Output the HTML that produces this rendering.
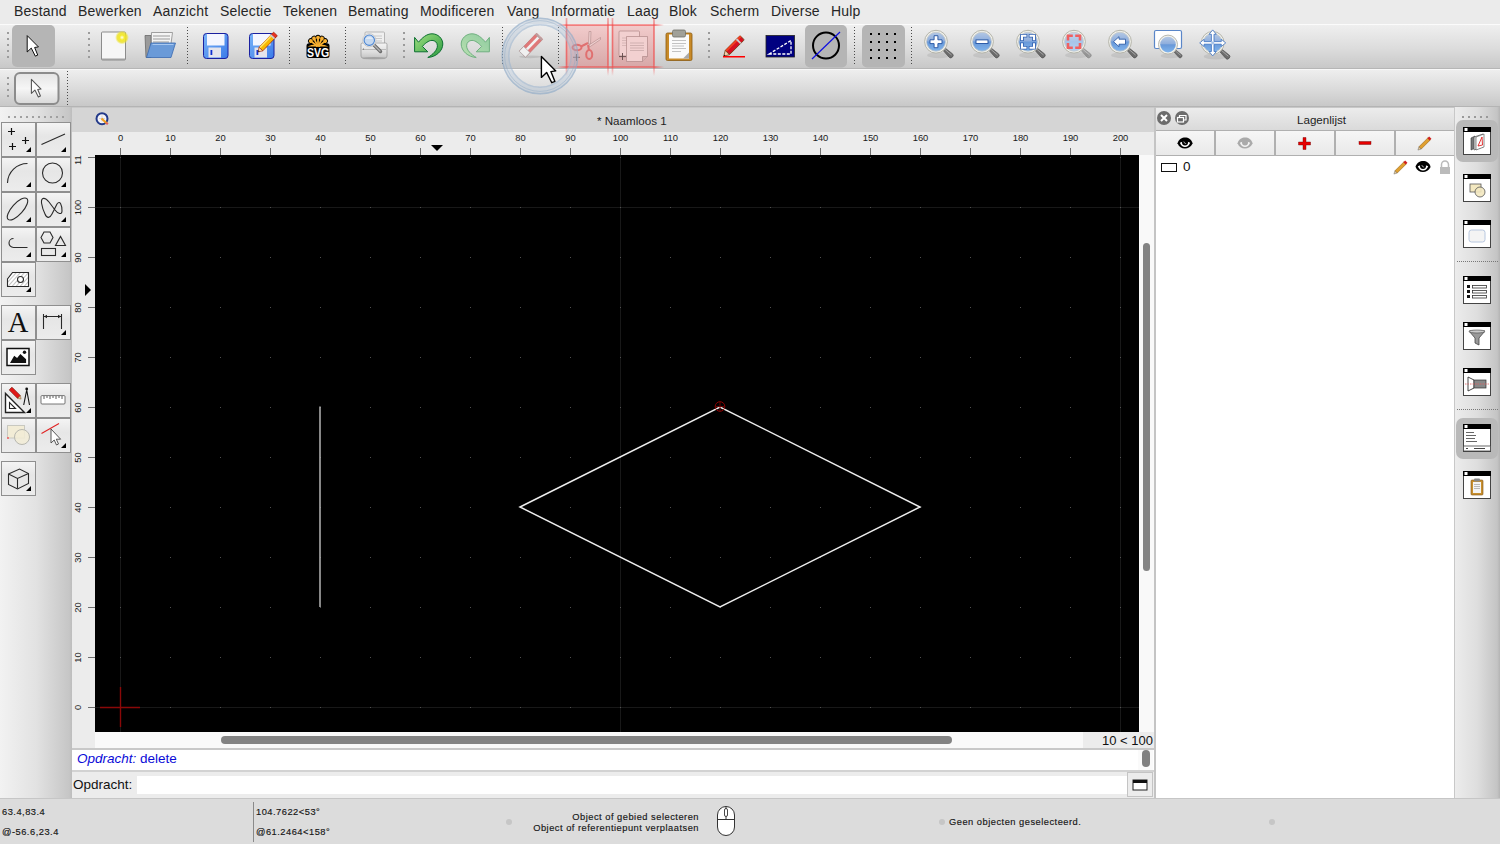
<!DOCTYPE html>
<html><head><meta charset="utf-8">
<style>
*{margin:0;padding:0;box-sizing:border-box}
html,body{width:1500px;height:844px;overflow:hidden;background:#ececec;font-family:"Liberation Sans",sans-serif;color:#1e1e1e}
.a{position:absolute}
.menu span{position:absolute;top:3px;font-size:14px;line-height:17px;letter-spacing:0.2px;color:#262626;white-space:nowrap}
.tb{position:absolute;left:0;width:1500px}
.sep{position:absolute;width:1px;border-left:1px dotted #555}
.grip{position:absolute;width:2px}
.grip i{position:absolute;left:0;width:2px;height:2px;background:#9a9a9a}
.ic{position:absolute}
.lb{position:absolute;width:35px;height:35px;border:1px solid #8f8f8f;background:linear-gradient(#f4f4f4,#e6e6e6 40%,#ececec)}
.lb svg{position:absolute;left:0;top:0}
.rn{position:absolute;font-size:10px;line-height:10px;color:#1a1a1a;text-align:center;width:30px}
.vn{position:absolute;font-size:10px;line-height:10px;color:#1a1a1a;text-align:center;width:30px;transform:rotate(-90deg)}
.st{position:absolute;font-size:9.3px;line-height:12px;letter-spacing:0.5px;color:#161616;white-space:nowrap;-webkit-text-stroke:0.15px #161616}
.rd{position:absolute;left:1463px;width:28px;height:28px}
</style></head><body>

<!-- MENU BAR -->
<div class="a menu" style="left:0;top:0;width:1500px;height:24px;background:#ebebeb">
<span style="left:14px">Bestand</span>
<span style="left:78px">Bewerken</span>
<span style="left:153px">Aanzicht</span>
<span style="left:220px">Selectie</span>
<span style="left:283px">Tekenen</span>
<span style="left:348px">Bemating</span>
<span style="left:420px">Modificeren</span>
<span style="left:507px">Vang</span>
<span style="left:551px">Informatie</span>
<span style="left:627px">Laag</span>
<span style="left:669px">Blok</span>
<span style="left:710px">Scherm</span>
<span style="left:771px">Diverse</span>
<span style="left:831px">Hulp</span>
</div>

<!-- TOOLBAR 1 -->
<div class="tb" style="top:24px;height:45px;background:linear-gradient(#efefef,#dcdcdc 55%,#c8c8c8);border-top:1px solid #fbfbfb;border-bottom:1px solid #b6b6b6"></div>
<!-- TOOLBAR 2 -->
<div class="tb" style="top:69px;height:38px;background:linear-gradient(#eeeeee,#dadada 55%,#c8c8c8);border-top:1px solid #f8f8f8;border-bottom:1px solid #b4b4b4"></div>

<div id="toolbar-icons"></div><!-- TBICONS --><svg class="a" style="left:0;top:0" width="1500" height="110" viewBox="0 0 1500 110"><defs>
<linearGradient id="lg" x1="0" y1="0" x2="0" y2="1"><stop offset="0" stop-color="#b4c8e4"/><stop offset="0.48" stop-color="#8cacdc"/><stop offset="0.5" stop-color="#6898d8"/><stop offset="1" stop-color="#80b4ec"/></linearGradient>
<linearGradient id="lgp" x1="0" y1="0" x2="0" y2="1"><stop offset="0" stop-color="#c8d6ea"/><stop offset="0.5" stop-color="#a8c4e8"/><stop offset="1" stop-color="#b4d0f0"/></linearGradient>
<linearGradient id="fl" x1="0" y1="0" x2="1" y2="1"><stop offset="0" stop-color="#7ab4f8"/><stop offset="1" stop-color="#3a7ae8"/></linearGradient>
<linearGradient id="gr" x1="0" y1="0" x2="1" y2="1"><stop offset="0" stop-color="#a0e080"/><stop offset="1" stop-color="#2a9a40"/></linearGradient>
<linearGradient id="grp" x1="0" y1="0" x2="1" y2="1"><stop offset="0" stop-color="#90cca0"/><stop offset="1" stop-color="#b8e0b0"/></linearGradient>
<radialGradient id="glow"><stop offset="0" stop-color="#fffff0"/><stop offset="0.35" stop-color="#f4ea30"/><stop offset="0.7" stop-color="#ece020" stop-opacity="0.8"/><stop offset="1" stop-color="#f0e840" stop-opacity="0"/></radialGradient>
<linearGradient id="pk" x1="0" y1="0" x2="0" y2="1"><stop offset="0" stop-color="#f2caca"/><stop offset="1" stop-color="#d8a6a6"/></linearGradient>
<linearGradient id="rl" x1="0" y1="0" x2="1" y2="0"><stop offset="0" stop-color="#f04848" stop-opacity="0"/><stop offset="0.08" stop-color="#f04848" stop-opacity="0.65"/><stop offset="0.92" stop-color="#f04848" stop-opacity="0.65"/><stop offset="1" stop-color="#f04848" stop-opacity="0"/></linearGradient>
<linearGradient id="rv" x1="0" y1="0" x2="0" y2="1"><stop offset="0" stop-color="#f04848" stop-opacity="0.4"/><stop offset="0.15" stop-color="#f04848" stop-opacity="0.65"/><stop offset="0.8" stop-color="#f04848" stop-opacity="0.65"/><stop offset="1" stop-color="#f04848" stop-opacity="0"/></linearGradient>
</defs><rect x="7" y="32" width="2" height="2" fill="#9c9c9c"/><rect x="7" y="38" width="2" height="2" fill="#9c9c9c"/><rect x="7" y="44" width="2" height="2" fill="#9c9c9c"/><rect x="7" y="50" width="2" height="2" fill="#9c9c9c"/><rect x="7" y="56" width="2" height="2" fill="#9c9c9c"/><rect x="12" y="25" width="43" height="42" rx="5" fill="#b5b5b5"/><path transform="translate(27.2 35.6) scale(0.78)" d="M0 0V21L5.2 16L10.4 26.3L13.5 25L9.5 15.2L14.4 14.5Z" fill="#fff" stroke="#000" stroke-width="1.2" stroke-linejoin="round"/><rect x="88" y="32" width="2" height="2" fill="#9c9c9c"/><rect x="88" y="38" width="2" height="2" fill="#9c9c9c"/><rect x="88" y="44" width="2" height="2" fill="#9c9c9c"/><rect x="88" y="50" width="2" height="2" fill="#9c9c9c"/><rect x="88" y="56" width="2" height="2" fill="#9c9c9c"/><rect x="101.5" y="32" width="24" height="28" rx="1" fill="#f6f6f6" stroke="#8c8c8c" stroke-width="1"/><rect x="102" y="58.5" width="23" height="1.5" fill="#a0a0a0"/><circle cx="122" cy="37.5" r="7" fill="url(#glow)"/><path d="M145 35.5h6v22h-5z" fill="#9a9a9a" stroke="#6a6a6a" stroke-width="0.8"/><path d="M151.5 32.5h21l-2 15h-19z" fill="#f4f4f4" stroke="#8a8a8a" stroke-width="0.8"/><path d="M153 36h17M153 39h17M153 42h16" stroke="#b8b8b8" stroke-width="1.5"/><path d="M151 43h24.5l-4.5 14.5h-24.5z" fill="#6a9ad8" stroke="#3a6ab0" stroke-width="0.8"/><path d="M152.5 44.5h21" stroke="#a8c8f0" stroke-width="1"/><line x1="187.5" y1="27" x2="187.5" y2="66" stroke="#4a4a4a" stroke-width="1" stroke-dasharray="1 2"/><rect x="203.5" y="33.5" width="24.5" height="25" rx="3" fill="url(#fl)" stroke="#1a20a0" stroke-width="1"/><rect x="207" y="34" width="17.5" height="11.5" fill="#f4f6ff"/><rect x="208.5" y="47.5" width="12.5" height="10" fill="#e4e4ec"/><rect x="210.5" y="50" width="1.8" height="5" fill="#1030d0"/><rect x="249.5" y="33.5" width="24.5" height="25" rx="3" fill="url(#fl)" stroke="#1a20a0" stroke-width="1"/><rect x="253" y="34" width="17.5" height="11.5" fill="#f4f6ff"/><rect x="254.5" y="47.5" width="12.5" height="10" fill="#e4e4ec"/><rect x="256.5" y="50" width="1.8" height="5" fill="#1030d0"/><g transform="translate(259.5 50.5) rotate(-46)"><rect x="2" y="-2.6" width="19" height="5.2" fill="#f8b800" stroke="#a02000" stroke-width="0.7"/><rect x="2" y="-2.6" width="19" height="1.7" fill="#ffe060"/><rect x="19.5" y="-2.6" width="3.5" height="5.2" fill="#e83020" stroke="#a02000" stroke-width="0.7"/><rect x="18" y="-2.6" width="1.8" height="5.2" fill="#ccc"/><path d="M2 -2.6L-2 0L2 2.6Z" fill="#f8e0b0" stroke="#a02000" stroke-width="0.6"/><path d="M-0.5 -1L-2 0L-0.5 1Z" fill="#222"/></g><line x1="289.5" y1="27" x2="289.5" y2="66" stroke="#4a4a4a" stroke-width="1" stroke-dasharray="1 2"/><g><path d="M306.5 46Q306.5 43.3 309 43.3H327Q329.5 43.3 329.5 46V55.5Q329.5 58 327 58H309Q306.5 58 306.5 55.5Z" fill="#000"/><g transform="rotate(-50 318 47)"><path d="M318 46V37.5" stroke="#000" stroke-width="5.4" stroke-linecap="round"/></g><g transform="rotate(-25 318 47)"><path d="M318 46V37.5" stroke="#000" stroke-width="5.4" stroke-linecap="round"/></g><g transform="rotate(0 318 47)"><path d="M318 46V37.5" stroke="#000" stroke-width="5.4" stroke-linecap="round"/></g><g transform="rotate(25 318 47)"><path d="M318 46V37.5" stroke="#000" stroke-width="5.4" stroke-linecap="round"/></g><g transform="rotate(50 318 47)"><path d="M318 46V37.5" stroke="#000" stroke-width="5.4" stroke-linecap="round"/></g><g transform="rotate(-50 318 47)"><path d="M318 45.5V37.5" stroke="#f8b030" stroke-width="1.8" stroke-linecap="round"/><circle cx="318" cy="37.6" r="1.9" fill="#f8b030"/></g><g transform="rotate(-25 318 47)"><path d="M318 45.5V37.5" stroke="#f8b030" stroke-width="1.8" stroke-linecap="round"/><circle cx="318" cy="37.6" r="1.9" fill="#f8b030"/></g><g transform="rotate(0 318 47)"><path d="M318 45.5V37.5" stroke="#f8b030" stroke-width="1.8" stroke-linecap="round"/><circle cx="318" cy="37.6" r="1.9" fill="#f8b030"/></g><g transform="rotate(25 318 47)"><path d="M318 45.5V37.5" stroke="#f8b030" stroke-width="1.8" stroke-linecap="round"/><circle cx="318" cy="37.6" r="1.9" fill="#f8b030"/></g><g transform="rotate(50 318 47)"><path d="M318 45.5V37.5" stroke="#f8b030" stroke-width="1.8" stroke-linecap="round"/><circle cx="318" cy="37.6" r="1.9" fill="#f8b030"/></g><path d="M307.5 46.6Q312 44 318 44.5Q324 44 328.5 46.6Z" fill="#f8b030"/><text transform="translate(318 57) scale(0.78 1)" text-anchor="middle" font-family="Liberation Sans" font-weight="bold" font-size="13.5" fill="#fff">SVG</text></g><line x1="345.5" y1="27" x2="345.5" y2="66" stroke="#4a4a4a" stroke-width="1" stroke-dasharray="1 2"/><defs><linearGradient id="prb" x1="0" y1="0" x2="0" y2="1"><stop offset="0" stop-color="#f4f4f4"/><stop offset="0.6" stop-color="#dedede"/><stop offset="1" stop-color="#c4c4c4"/></linearGradient></defs><rect x="365" y="32" width="19.5" height="16" rx="1" fill="#f0f0f0" stroke="#a8a8a8" stroke-width="0.8"/><path d="M372 36h10M372 38.5h10M372 41h10" stroke="#c8c8c8" stroke-width="1.2"/><path d="M361 44.5q0-1.5 1.5-1.5h23q1.5 0 1.5 1.5v11.5q0 2-2 2h-22q-2 0-2-2z" fill="url(#prb)" stroke="#9a9a9a" stroke-width="0.8"/><path d="M362 49.5h24" stroke="#b0b0b0" stroke-width="0.8"/><circle cx="363.5" cy="49" r="0.6" fill="#555"/><ellipse cx="374" cy="58.5" rx="12" ry="1.2" fill="#000" opacity="0.12"/><path d="M373.5 44.5L380.5 51.5" stroke="#6a6a6a" stroke-width="3.4" stroke-linecap="round"/><path d="M374 45L380 51" stroke="#b4b4b4" stroke-width="1.4" stroke-linecap="round"/><circle cx="369.3" cy="40.2" r="6.6" fill="#f2f2f2" stroke="#c0c0c0" stroke-width="0.8"/><circle cx="369.3" cy="40.2" r="5.2" fill="#c4d8f0" stroke="#4a84d0" stroke-width="1.1"/><path d="M365.5 39a4 3 0 0 1 7.6 0" fill="#e8f0fa" opacity="0.8"/><rect x="403" y="32" width="2" height="2" fill="#9a9a9a"/><rect x="403" y="38" width="2" height="2" fill="#9a9a9a"/><rect x="403" y="44" width="2" height="2" fill="#9a9a9a"/><rect x="403" y="50" width="2" height="2" fill="#9a9a9a"/><rect x="403" y="56" width="2" height="2" fill="#9a9a9a"/><path transform="translate(408 26)" d="M6.6 11.4L10.5 16.2C14 12 18.5 7.8 24 7.8C30 7.8 34.8 12.5 34.8 18C34.8 25 28 31 19.8 31.5C25 28.5 29.4 24 29.4 19.8C29.4 16.5 27 14.4 24 14.4C20.5 14.4 17 17.5 14.4 20.4L19.8 25.8L6.6 25.8Z" fill="url(#gr)" stroke="#0c7030" stroke-width="1"/><path transform="translate(496 26) scale(-1 1)" d="M6.6 11.4L10.5 16.2C14 12 18.5 7.8 24 7.8C30 7.8 34.8 12.5 34.8 18C34.8 25 28 31 19.8 31.5C25 28.5 29.4 24 29.4 19.8C29.4 16.5 27 14.4 24 14.4C20.5 14.4 17 17.5 14.4 20.4L19.8 25.8L6.6 25.8Z" fill="url(#grp)" stroke="#70b080" stroke-width="1"/><line x1="502.5" y1="27" x2="502.5" y2="66" stroke="#4a4a4a" stroke-width="1" stroke-dasharray="1 2"/><ellipse cx="530" cy="56.8" rx="11" ry="1.4" fill="#000" opacity="0.1"/><g transform="translate(531 45.2) rotate(-46)"><rect x="-12.5" y="-4.4" width="25" height="8.8" rx="1" fill="#e07878" stroke="#c07070" stroke-width="0.6"/><rect x="-12.5" y="-1.3" width="25" height="2.6" fill="#f2f2f2"/><rect x="10.5" y="-4.4" width="2" height="8.8" fill="#b8a0a0"/><rect x="-12.5" y="-4.4" width="6.5" height="8.8" fill="#f0f0f0" stroke="#a0a0a0" stroke-width="0.6"/></g><line x1="558.5" y1="27" x2="558.5" y2="66" stroke="#4a4a4a" stroke-width="1" stroke-dasharray="1 2"/><rect x="566" y="25" width="42" height="42" fill="url(#pk)" opacity="0.95"/><rect x="612" y="25" width="42" height="42" fill="url(#pk)" opacity="0.95"/><path d="M588.5 44L589 31.5L591 31.5L590.5 44Z" fill="#f0d0d0" stroke="#b89090" stroke-width="0.7"/><path d="M589 45L600.5 37.5L600.5 39.5L589.5 47Z" fill="#f0d0d0" stroke="#b89090" stroke-width="0.7"/><ellipse cx="577" cy="47.5" rx="4.5" ry="2.8" fill="none" stroke="#e07070" stroke-width="2"/><ellipse cx="589.2" cy="54.5" rx="3" ry="4.5" fill="none" stroke="#e07070" stroke-width="2"/><path d="M581 46.5L588 43M588 45L589 50" stroke="#e07070" stroke-width="2"/><path d="M573 57.3h7M576.5 54v7" stroke="#806060" stroke-width="0.9"/><rect x="619" y="31" width="20.5" height="25" rx="1" fill="#f2d0d0" stroke="#b08888" stroke-width="0.7"/><path d="M622 38h14M622 40.5h14M622 43h14M622 45.5h14" stroke="#d0b0b0" stroke-width="0.8"/><path d="M626.5 36.5h21v20l-5 5h-16z" fill="#f2d0d0" stroke="#b08888" stroke-width="0.7"/><path d="M642.5 61.5v-5h5" fill="#d8b0b0" stroke="#b08888" stroke-width="0.7"/><path d="M630 43h14M630 45.5h14M630 48h14M630 50.5h14" stroke="#c8a8a8" stroke-width="0.8"/><path d="M619 56.6h7M622.5 53v7" stroke="#604848" stroke-width="0.9"/><rect x="557" y="24.2" width="107" height="1.7" fill="url(#rl)"/><rect x="557" y="66.2" width="107" height="1.7" fill="url(#rl)"/><rect x="565.65" y="18" width="1.7" height="58" fill="url(#rv)"/><rect x="607.15" y="18" width="1.7" height="58" fill="url(#rv)"/><rect x="611.65" y="18" width="1.7" height="58" fill="url(#rv)"/><rect x="653.15" y="18" width="1.7" height="58" fill="url(#rv)"/><rect x="666" y="33" width="26" height="27.5" rx="1.5" fill="#c88a28" stroke="#8a5a10" stroke-width="0.8"/><rect x="669" y="34.5" width="20" height="24" fill="#fafafa"/><path d="M689 58.5v-6l-6 6z" fill="#aaa"/><rect x="672.5" y="30" width="13" height="7" rx="1.5" fill="#a0a098" stroke="#707068" stroke-width="0.8"/><path d="M672 40.5h14M672 43.5h14M672 46h12M672 48.5h14M672 51.5h9" stroke="#bbb" stroke-width="0.9"/><rect x="708" y="32" width="2" height="2" fill="#9a9a9a"/><rect x="708" y="38" width="2" height="2" fill="#9a9a9a"/><rect x="708" y="44" width="2" height="2" fill="#9a9a9a"/><rect x="708" y="50" width="2" height="2" fill="#9a9a9a"/><rect x="708" y="56" width="2" height="2" fill="#9a9a9a"/><g transform="translate(724.5 55.4) rotate(-45)"><rect x="4" y="-3" width="21" height="6" rx="1" fill="#d81020" stroke="#6a3a10" stroke-width="0.8"/><rect x="4" y="-3" width="21" height="2" fill="#f04020"/><rect x="19" y="-3" width="2" height="6" fill="#ccc"/><path d="M4 -3L-1 0L4 3Z" fill="#f4d0b0" stroke="#6a3a10" stroke-width="0.7"/><path d="M0.5 -0.9L-1 0L0.5 0.9Z" fill="#111"/></g><rect x="723" y="56" width="22" height="1.5" fill="#ff0000"/><rect x="766" y="35.5" width="28.5" height="21.5" fill="#000080" stroke="#222" stroke-width="0.8"/><path d="M769 54L791 40.5V54Z" fill="none" stroke="#fff" stroke-width="1.3" stroke-dasharray="3 1.5"/><rect x="805" y="25" width="42" height="42.5" rx="5" fill="#b5b5b5"/><circle cx="826" cy="45.6" r="13" fill="none" stroke="#000" stroke-width="2"/><path d="M812 59L840 32" stroke="#1010e0" stroke-width="1.2"/><line x1="854.5" y1="27" x2="854.5" y2="66" stroke="#4a4a4a" stroke-width="1" stroke-dasharray="1 2"/><rect x="862" y="25" width="43" height="42.5" rx="5" fill="#b5b5b5"/><rect x="870" y="33" width="2" height="2" fill="#000"/><rect x="870" y="41" width="2" height="2" fill="#000"/><rect x="870" y="49" width="2" height="2" fill="#000"/><rect x="870" y="57" width="2" height="2" fill="#000"/><rect x="878" y="33" width="2" height="2" fill="#000"/><rect x="878" y="41" width="2" height="2" fill="#000"/><rect x="878" y="49" width="2" height="2" fill="#000"/><rect x="878" y="57" width="2" height="2" fill="#000"/><rect x="886" y="33" width="2" height="2" fill="#000"/><rect x="886" y="41" width="2" height="2" fill="#000"/><rect x="886" y="49" width="2" height="2" fill="#000"/><rect x="886" y="57" width="2" height="2" fill="#000"/><rect x="894" y="33" width="2" height="2" fill="#000"/><rect x="894" y="41" width="2" height="2" fill="#000"/><rect x="894" y="49" width="2" height="2" fill="#000"/><rect x="894" y="57" width="2" height="2" fill="#000"/><line x1="911.5" y1="27" x2="911.5" y2="66" stroke="#4a4a4a" stroke-width="1" stroke-dasharray="1 2"/><g transform="translate(936 41.7)"><ellipse cx="3.0" cy="13.5" rx="12.0" ry="3.0" fill="#000" opacity="0.08"/><g transform="scale(1.0) rotate(43)"><path d="M11 -1.6L20.5 -2.4Q22.5 -2.4 22.5 0Q22.5 2.4 20.5 2.4L11 1.6Z" fill="#6c6c6c" stroke="#4a4a4a" stroke-width="0.6"/><path d="M12 -0.5L20.5 -0.9" stroke="#a8a8a8" stroke-width="0.9"/></g><circle r="11.4" fill="#f2f2ec" stroke="#b4b4aa" stroke-width="1"/><circle r="9.5" fill="url(#lg)" stroke="#c4c8c8" stroke-width="0.8"/><path d="M-1.9 -6H1.9V-1.9H6V1.9H1.9V6H-1.9V1.9H-6V-1.9H-1.9Z" fill="#fff" stroke="#2050a0" stroke-width="0.9"/></g><g transform="translate(982 41.7)"><ellipse cx="3.0" cy="13.5" rx="12.0" ry="3.0" fill="#000" opacity="0.08"/><g transform="scale(1.0) rotate(43)"><path d="M11 -1.6L20.5 -2.4Q22.5 -2.4 22.5 0Q22.5 2.4 20.5 2.4L11 1.6Z" fill="#6c6c6c" stroke="#4a4a4a" stroke-width="0.6"/><path d="M12 -0.5L20.5 -0.9" stroke="#a8a8a8" stroke-width="0.9"/></g><circle r="11.4" fill="#f2f2ec" stroke="#b4b4aa" stroke-width="1"/><circle r="9.5" fill="url(#lg)" stroke="#c4c8c8" stroke-width="0.8"/><rect x="-6" y="-1.8" width="12" height="3.6" fill="#fff" stroke="#2050a0" stroke-width="0.9"/></g><g transform="translate(1028 41.7)"><ellipse cx="3.0" cy="13.5" rx="12.0" ry="3.0" fill="#000" opacity="0.08"/><g transform="scale(1.0) rotate(43)"><path d="M11 -1.6L20.5 -2.4Q22.5 -2.4 22.5 0Q22.5 2.4 20.5 2.4L11 1.6Z" fill="#6c6c6c" stroke="#4a4a4a" stroke-width="0.6"/><path d="M12 -0.5L20.5 -0.9" stroke="#a8a8a8" stroke-width="0.9"/></g><circle r="11.4" fill="#f2f2ec" stroke="#b4b4aa" stroke-width="1"/><circle r="9.5" fill="url(#lg)" stroke="#c4c8c8" stroke-width="0.8"/><path d="M-6 -2.5V-6H-2.5M2.5 -6H6V-2.5M6 2.5V6H2.5M-2.5 6H-6V2.5" fill="none" stroke="#3060b0" stroke-width="3.6" stroke-linecap="square"/><path d="M-6 -2.5V-6H-2.5M2.5 -6H6V-2.5M6 2.5V6H2.5M-2.5 6H-6V2.5" fill="none" stroke="#fff" stroke-width="2" stroke-linecap="square"/></g><g transform="translate(1074 41.7)"><ellipse cx="3.0" cy="13.5" rx="12.0" ry="3.0" fill="#000" opacity="0.08"/><g transform="scale(1.0) rotate(43)" opacity="0.55"><path d="M11 -1.6L20.5 -2.4Q22.5 -2.4 22.5 0Q22.5 2.4 20.5 2.4L11 1.6Z" fill="#6c6c6c" stroke="#4a4a4a" stroke-width="0.6"/><path d="M12 -0.5L20.5 -0.9" stroke="#a8a8a8" stroke-width="0.9"/></g><circle r="11.4" fill="#f2f2ec" stroke="#b4b4aa" stroke-width="1"/><circle r="9.5" fill="url(#lgp)" stroke="#c4c8c8" stroke-width="0.8"/><path d="M-6 -2.5V-6H-2.5M2.5 -6H6V-2.5M6 2.5V6H2.5M-2.5 6H-6V2.5" fill="none" stroke="#f06060" stroke-width="2.6" stroke-linecap="square"/></g><g transform="translate(1120 41.7)"><ellipse cx="3.0" cy="13.5" rx="12.0" ry="3.0" fill="#000" opacity="0.08"/><g transform="scale(1.0) rotate(43)"><path d="M11 -1.6L20.5 -2.4Q22.5 -2.4 22.5 0Q22.5 2.4 20.5 2.4L11 1.6Z" fill="#6c6c6c" stroke="#4a4a4a" stroke-width="0.6"/><path d="M12 -0.5L20.5 -0.9" stroke="#a8a8a8" stroke-width="0.9"/></g><circle r="11.4" fill="#f2f2ec" stroke="#b4b4aa" stroke-width="1"/><circle r="9.5" fill="url(#lg)" stroke="#c4c8c8" stroke-width="0.8"/><path d="M-6.5 0L-1 -5V-2.5H5.5V2.5H-1V5Z" fill="#fff" stroke="#2050a0" stroke-width="0.8"/></g><rect x="1154.5" y="30.5" width="27" height="18" rx="1.5" fill="#fff" stroke="#5a86c8" stroke-width="1.2"/><g transform="translate(1168 44.6)"><ellipse cx="2.46" cy="11.069999999999999" rx="9.84" ry="2.46" fill="#000" opacity="0.08"/><g transform="scale(0.82) rotate(43)"><path d="M11 -1.6L20.5 -2.4Q22.5 -2.4 22.5 0Q22.5 2.4 20.5 2.4L11 1.6Z" fill="#6c6c6c" stroke="#4a4a4a" stroke-width="0.6"/><path d="M12 -0.5L20.5 -0.9" stroke="#a8a8a8" stroke-width="0.9"/></g><circle r="9.5" fill="#f2f2ec" stroke="#b8b8b0" stroke-width="1"/><circle r="7.8" fill="url(#lg)"/></g><g transform="translate(1212.7 42.9)"><ellipse cx="3.0" cy="13.5" rx="12.0" ry="3.0" fill="#000" opacity="0.08"/><g transform="scale(1.0) rotate(43)"><path d="M11 -1.6L20.5 -2.4Q22.5 -2.4 22.5 0Q22.5 2.4 20.5 2.4L11 1.6Z" fill="#6c6c6c" stroke="#4a4a4a" stroke-width="0.6"/><path d="M12 -0.5L20.5 -0.9" stroke="#a8a8a8" stroke-width="0.9"/></g><circle r="11.4" fill="#f2f2ec" stroke="#b4b4aa" stroke-width="1"/><circle r="9.5" fill="url(#lg)" stroke="#c4c8c8" stroke-width="0.8"/><path d="M0 -13L-3.6 -8.6H-1.3V-1.3H-8.6V-3.6L-13 0L-8.6 3.6V1.3H-1.3V8.6H-3.6L0 13L3.6 8.6H1.3V1.3H8.6V3.6L13 0L8.6 -3.6V-1.3H1.3V-8.6H3.6Z" fill="#fff" stroke="#3a70c0" stroke-width="0.8"/><rect x="-1.5" y="-1.5" width="3" height="3" fill="#a8c4e8"/></g><rect x="7" y="77" width="2" height="2" fill="#9c9c9c"/><rect x="7" y="83" width="2" height="2" fill="#9c9c9c"/><rect x="7" y="89" width="2" height="2" fill="#9c9c9c"/><rect x="7" y="95" width="2" height="2" fill="#9c9c9c"/><rect x="15" y="73" width="43.5" height="31" rx="5" fill="url(#btn2)" stroke="#8c8c8c" stroke-width="2"/><path transform="translate(31.4 79.3) scale(0.67)" d="M0 0V21L5.2 16L10.4 26.3L13.5 25L9.5 15.2L14.4 14.5Z" fill="#fff" stroke="#555" stroke-width="1.6" stroke-linejoin="round"/><line x1="67.5" y1="71" x2="67.5" y2="106" stroke="#4a4a4a" stroke-width="1" stroke-dasharray="1 2"/><defs><filter id="bl" x="-20%" y="-20%" width="140%" height="140%"><feGaussianBlur stdDeviation="0.6"/></filter></defs><g filter="url(#bl)"><circle cx="540" cy="56" r="34.5" fill="none" stroke="#a4bcd4" stroke-width="8" opacity="0.32"/><circle cx="540" cy="56" r="37.8" fill="none" stroke="#88a6c4" stroke-width="1.4" opacity="0.5"/><circle cx="540" cy="56" r="35.4" fill="none" stroke="#88a6c4" stroke-width="1" opacity="0.4"/><circle cx="540" cy="56" r="31.2" fill="none" stroke="#98b2cc" stroke-width="1.4" opacity="0.4"/></g><path transform="translate(541.4 56.4) scale(1.0)" d="M0 0V21L5.2 16L10.4 26.3L13.5 25L9.5 15.2L14.4 14.5Z" fill="#fff" stroke="#000" stroke-width="1.4" stroke-linejoin="round"/><defs><linearGradient id="btn2" x1="0" y1="0" x2="0" y2="1"><stop offset="0" stop-color="#e4e4e4"/><stop offset="0.5" stop-color="#f6f6f6"/><stop offset="1" stop-color="#d8d8d8"/></linearGradient></defs></svg><!-- /TBICONS -->

<!-- LEFT DOCK -->
<div class="a" style="left:0;top:107px;width:72px;height:691px;background:linear-gradient(90deg,#f2f2f2,#e2e2e2 50%,#c6c6c6 96%,#bdbdbd)"></div>
<div class="a" style="left:8px;top:116px;width:56px;height:2px;background:repeating-linear-gradient(90deg,#a0a0a0 0 2px,transparent 2px 6px)"></div>
<div class="lb" style="left:1px;top:122px"><svg width="35" height="35" viewBox="1 1 35 35"><path d="M7 9.5h7M10.5 6v7M21 18.5h7M24.5 15v7M8 24.5h7M11.5 21v7" stroke="#111" stroke-width="1.2"/><path d="M30 25v5h-5z" fill="#000"/></svg></div>
<div class="lb" style="left:36px;top:122px"><svg width="35" height="35" viewBox="1 1 35 35"><path d="M5.5 22.5L29 12" fill="none" stroke="#2a2a2a" stroke-width="1.1"/><path d="M30 25v5h-5z" fill="#000"/></svg></div>
<div class="lb" style="left:1px;top:157px"><svg width="35" height="35" viewBox="1 1 35 35"><path d="M6.5 26A20 20 0 0 1 26.5 6.5" fill="none" stroke="#2a2a2a" stroke-width="1.1"/><path d="M30 25v5h-5z" fill="#000"/></svg></div>
<div class="lb" style="left:36px;top:157px"><svg width="35" height="35" viewBox="1 1 35 35"><circle cx="16.5" cy="16" r="10" fill="none" stroke="#2a2a2a" stroke-width="1.1"/><path d="M30 25v5h-5z" fill="#000"/></svg></div>
<div class="lb" style="left:1px;top:192px"><svg width="35" height="35" viewBox="1 1 35 35"><ellipse cx="16.5" cy="17" rx="14" ry="5.5" transform="rotate(-48 16.5 17)" fill="none" stroke="#2a2a2a" stroke-width="1.1"/><path d="M30 25v5h-5z" fill="#000"/></svg></div>
<div class="lb" style="left:36px;top:192px"><svg width="35" height="35" viewBox="1 1 35 35"><path d="M5.5 11C5 5 9 5 13 10L19 18C22 22 26 23 26 19C26 13 24 8 21 12L16 22C14 26 11 27 9 22C7 18 6 14 5.5 11Z" fill="none" stroke="#2a2a2a" stroke-width="1.1"/><path d="M30 25v5h-5z" fill="#000"/></svg></div>
<div class="lb" style="left:1px;top:227px"><svg width="35" height="35" viewBox="1 1 35 35"><path d="M12.5 11.5A4.5 4.5 0 0 0 12.5 20.5H26.5" fill="none" stroke="#2a2a2a" stroke-width="1.1"/><path d="M30 25v5h-5z" fill="#000"/></svg></div>
<div class="lb" style="left:36px;top:227px"><svg width="35" height="35" viewBox="1 1 35 35"><path d="M8 5h6l3 5.5l-3 5.5h-6l-3-5.5z" fill="none" stroke="#2a2a2a" stroke-width="1.1"/><path d="M19.5 18.5h10l-5-9z" fill="none" stroke="#2a2a2a" stroke-width="1.1"/><rect x="5.5" y="21.5" width="14" height="7" fill="none" stroke="#2a2a2a" stroke-width="1.1"/><path d="M30 25v5h-5z" fill="#000"/></svg></div>
<div class="lb" style="left:1px;top:262px"><svg width="35" height="35" viewBox="1 1 35 35"><defs><pattern id="h" width="3" height="3" patternUnits="userSpaceOnUse" patternTransform="rotate(42)"><rect width="3" height="3" fill="#fff"/><line x1="0" y1="0" x2="0" y2="3" stroke="#888" stroke-width="1"/></pattern></defs><path d="M11.5 10.5h16v14h-21v-7.5z" fill="url(#h)" stroke="#2a2a2a" stroke-width="1.1"/><circle cx="19.5" cy="17.5" r="3" fill="#fff" stroke="#2a2a2a" stroke-width="1.1"/><path d="M30 25v5h-5z" fill="#000"/></svg></div>
<div class="lb" style="left:1px;top:305px"><svg width="35" height="35" viewBox="1 1 35 35"><text x="17" y="27.3" text-anchor="middle" font-family="Liberation Serif" font-size="28.5" fill="#111">A</text></svg></div>
<div class="lb" style="left:36px;top:305px"><svg width="35" height="35" viewBox="1 1 35 35"><path d="M7.5 9v15M25.5 9v15M8 11.5h17" fill="none" stroke="#2a2a2a" stroke-width="1.1"/><path d="M8 11.5l3-1.8v3.6zM25 11.5l-3-1.8v3.6z" fill="#222"/><path d="M30 25v5h-5z" fill="#000"/></svg></div>
<div class="lb" style="left:1px;top:340px"><svg width="35" height="35" viewBox="1 1 35 35"><rect x="6" y="8.5" width="22" height="17" fill="#fff" stroke="#111" stroke-width="1.5"/><path d="M9 23l4.2-7.3l2.9 2.3l3.3-4l5.7 5.2v3.8z" fill="#111"/><circle cx="23.5" cy="12.3" r="1.7" fill="#111"/></svg></div>
<div class="lb" style="left:1px;top:383px"><svg width="35" height="35" viewBox="1 1 35 35"><path d="M4.5 10.5v19h19z" fill="#fff" stroke="#222" stroke-width="1.4"/><path d="M8.5 19.5v6h6z" fill="none" stroke="#222" stroke-width="1.1"/><g transform="translate(9.5 5.5) rotate(45)"><rect x="0" y="-2" width="12" height="4" rx="0.6" fill="#e01818" stroke="#702010" stroke-width="0.6"/><path d="M12 -2L15 0L12 2z" fill="#e8c090" stroke="#704010" stroke-width="0.4"/></g><path d="M25.7 7l-3 15M25.7 7l2.8 15" stroke="#111" stroke-width="1.1"/><circle cx="25.7" cy="6" r="1.4" fill="#111"/><path d="M30 25v5h-5z" fill="#000"/></svg></div>
<div class="lb" style="left:36px;top:383px"><svg width="35" height="35" viewBox="1 1 35 35"><rect x="5" y="12.6" width="24" height="8.4" rx="1" fill="#fff" stroke="#555" stroke-width="0.8"/><path d="M8 13v3M11 13v2M14 13v3M17 13v2M20 13v3M23 13v2M26 13v3" stroke="#333" stroke-width="0.8"/></svg></div>
<div class="lb" style="left:1px;top:418px"><svg width="35" height="35" viewBox="1 1 35 35"><rect x="6.5" y="7.5" width="17" height="12.5" fill="#f2ecd6" stroke="#c8c8c0" stroke-width="1"/><circle cx="21" cy="19" r="7.5" fill="#f2ecd6" fill-opacity="0.85" stroke="#b8b8b0" stroke-width="1"/><circle cx="7" cy="20" r="1" fill="#f06060"/></svg></div>
<div class="lb" style="left:36px;top:418px"><svg width="35" height="35" viewBox="1 1 35 35"><path d="M5.5 15.5L23 5.5" stroke="#e02020" stroke-width="1.1"/><path d="M15 11l0 14l3.2-3l2.3 5l2-1l-2.2-4.8h4.3z" fill="#fff" stroke="#444" stroke-width="0.9"/><path d="M30 25v5h-5z" fill="#000"/></svg></div>
<div class="lb" style="left:1px;top:461px"><svg width="35" height="35" viewBox="1 1 35 35"><path d="M7.5 13l11-5l9 4.5v10l-11 5.5l-9-4.5z" fill="none" stroke="#2a2a2a" stroke-width="1.1"/><path d="M7.5 13l9 4.5l11-5M16.5 17.5v10" fill="none" stroke="#2a2a2a" stroke-width="1.1"/><path d="M30 25v5h-5z" fill="#000"/></svg></div>


<!-- MDI -->
<div class="a" style="left:72px;top:107px;width:1082px;height:25px;background:#d5d5d5;border-top:1px solid #c8c8c8"></div>
<svg class="a" style="left:93px;top:110px" width="18" height="18"><circle cx="9" cy="8.7" r="5.5" fill="#f4f4f8" stroke="#233a8a" stroke-width="2"/><path d="M6 8.5h6M9 5.5v6" stroke="#c8c0c0" stroke-width="0.6"/><path d="M8.5 8.5l5.5 5" stroke="#f0a020" stroke-width="2.2"/><path d="M13.2 12.8l1.6 1.5" stroke="#e06060" stroke-width="2.2"/></svg>
<div class="a" style="left:597px;top:114px;font-size:11.6px;line-height:14px;color:#1e1e1e;white-space:nowrap">* Naamloos 1</div>
<div class="a" style="left:72px;top:132px;width:1082px;height:23px;background:#ececec"></div>
<div class="a" style="left:72px;top:155px;width:23px;height:577px;background:#ececec"></div>

<svg class="a" style="left:72px;top:132px" width="1082" height="600" viewBox="72 132 1082 600">
<g stroke="#6e6e6e" stroke-width="1"><line x1="120.5" y1="148" x2="120.5" y2="155"/><line x1="170.5" y1="148" x2="170.5" y2="155"/><line x1="220.5" y1="148" x2="220.5" y2="155"/><line x1="270.5" y1="148" x2="270.5" y2="155"/><line x1="320.5" y1="148" x2="320.5" y2="155"/><line x1="370.5" y1="148" x2="370.5" y2="155"/><line x1="420.5" y1="148" x2="420.5" y2="155"/><line x1="470.5" y1="148" x2="470.5" y2="155"/><line x1="520.5" y1="148" x2="520.5" y2="155"/><line x1="570.5" y1="148" x2="570.5" y2="155"/><line x1="620.5" y1="148" x2="620.5" y2="155"/><line x1="670.5" y1="148" x2="670.5" y2="155"/><line x1="720.5" y1="148" x2="720.5" y2="155"/><line x1="770.5" y1="148" x2="770.5" y2="155"/><line x1="820.5" y1="148" x2="820.5" y2="155"/><line x1="870.5" y1="148" x2="870.5" y2="155"/><line x1="920.5" y1="148" x2="920.5" y2="155"/><line x1="970.5" y1="148" x2="970.5" y2="155"/><line x1="1020.5" y1="148" x2="1020.5" y2="155"/><line x1="1070.5" y1="148" x2="1070.5" y2="155"/><line x1="1120.5" y1="148" x2="1120.5" y2="155"/><line x1="88" y1="707.5" x2="95" y2="707.5"/><line x1="88" y1="657.5" x2="95" y2="657.5"/><line x1="88" y1="607.5" x2="95" y2="607.5"/><line x1="88" y1="557.5" x2="95" y2="557.5"/><line x1="88" y1="507.5" x2="95" y2="507.5"/><line x1="88" y1="457.5" x2="95" y2="457.5"/><line x1="88" y1="407.5" x2="95" y2="407.5"/><line x1="88" y1="357.5" x2="95" y2="357.5"/><line x1="88" y1="307.5" x2="95" y2="307.5"/><line x1="88" y1="257.5" x2="95" y2="257.5"/><line x1="88" y1="207.5" x2="95" y2="207.5"/><line x1="88" y1="157.5" x2="95" y2="157.5"/></g>
<g font-family="Liberation Sans" font-size="9.4" fill="#1a1a1a" text-anchor="middle"><text x="120.5" y="140.6">0</text><text x="170.5" y="140.6">10</text><text x="220.5" y="140.6">20</text><text x="270.5" y="140.6">30</text><text x="320.5" y="140.6">40</text><text x="370.5" y="140.6">50</text><text x="420.5" y="140.6">60</text><text x="470.5" y="140.6">70</text><text x="520.5" y="140.6">80</text><text x="570.5" y="140.6">90</text><text x="620.5" y="140.6">100</text><text x="670.5" y="140.6">110</text><text x="720.5" y="140.6">120</text><text x="770.5" y="140.6">130</text><text x="820.5" y="140.6">140</text><text x="870.5" y="140.6">150</text><text x="920.5" y="140.6">160</text><text x="970.5" y="140.6">170</text><text x="1020.5" y="140.6">180</text><text x="1070.5" y="140.6">190</text><text x="1120.5" y="140.6">200</text></g>
<defs><clipPath id="vc"><rect x="72" y="155" width="23" height="577"/></clipPath></defs><g clip-path="url(#vc)" font-family="Liberation Sans" font-size="9.4" fill="#1a1a1a" text-anchor="middle"><text transform="translate(80.8 707.5) rotate(-90)">0</text><text transform="translate(80.8 657.5) rotate(-90)">10</text><text transform="translate(80.8 607.5) rotate(-90)">20</text><text transform="translate(80.8 557.5) rotate(-90)">30</text><text transform="translate(80.8 507.5) rotate(-90)">40</text><text transform="translate(80.8 457.5) rotate(-90)">50</text><text transform="translate(80.8 407.5) rotate(-90)">60</text><text transform="translate(80.8 357.5) rotate(-90)">70</text><text transform="translate(80.8 307.5) rotate(-90)">80</text><text transform="translate(80.8 257.5) rotate(-90)">90</text><text transform="translate(80.8 207.5) rotate(-90)">100</text><text transform="translate(80.8 157.5) rotate(-90)">110</text></g>
<path d="M431 145h12l-6 6z" fill="#000"/><path d="M85 284v12l6-6z" fill="#000"/>
</svg>
<!-- CANVAS -->
<svg class="a" style="left:95px;top:155px" width="1044" height="577" viewBox="95 155 1044 577">
<rect x="95" y="155" width="1044" height="577" fill="#000"/>
<g stroke="#181818" stroke-width="1">
<line x1="120.5" y1="155" x2="120.5" y2="732"/>
<line x1="620.5" y1="155" x2="620.5" y2="732"/>
<line x1="1120.5" y1="155" x2="1120.5" y2="732"/>
<line x1="95" y1="207.5" x2="1139" y2="207.5"/>
<line x1="95" y1="707.5" x2="1139" y2="707.5"/>
</g>
<path fill="#505050" d="M120 707h1v1h-1zM120 657h1v1h-1zM120 607h1v1h-1zM120 557h1v1h-1zM120 507h1v1h-1zM120 457h1v1h-1zM120 407h1v1h-1zM120 357h1v1h-1zM120 307h1v1h-1zM120 257h1v1h-1zM120 207h1v1h-1zM120 157h1v1h-1zM170 707h1v1h-1zM170 657h1v1h-1zM170 607h1v1h-1zM170 557h1v1h-1zM170 507h1v1h-1zM170 457h1v1h-1zM170 407h1v1h-1zM170 357h1v1h-1zM170 307h1v1h-1zM170 257h1v1h-1zM170 207h1v1h-1zM170 157h1v1h-1zM220 707h1v1h-1zM220 657h1v1h-1zM220 607h1v1h-1zM220 557h1v1h-1zM220 507h1v1h-1zM220 457h1v1h-1zM220 407h1v1h-1zM220 357h1v1h-1zM220 307h1v1h-1zM220 257h1v1h-1zM220 207h1v1h-1zM220 157h1v1h-1zM270 707h1v1h-1zM270 657h1v1h-1zM270 607h1v1h-1zM270 557h1v1h-1zM270 507h1v1h-1zM270 457h1v1h-1zM270 407h1v1h-1zM270 357h1v1h-1zM270 307h1v1h-1zM270 257h1v1h-1zM270 207h1v1h-1zM270 157h1v1h-1zM320 707h1v1h-1zM320 657h1v1h-1zM320 607h1v1h-1zM320 557h1v1h-1zM320 507h1v1h-1zM320 457h1v1h-1zM320 407h1v1h-1zM320 357h1v1h-1zM320 307h1v1h-1zM320 257h1v1h-1zM320 207h1v1h-1zM320 157h1v1h-1zM370 707h1v1h-1zM370 657h1v1h-1zM370 607h1v1h-1zM370 557h1v1h-1zM370 507h1v1h-1zM370 457h1v1h-1zM370 407h1v1h-1zM370 357h1v1h-1zM370 307h1v1h-1zM370 257h1v1h-1zM370 207h1v1h-1zM370 157h1v1h-1zM420 707h1v1h-1zM420 657h1v1h-1zM420 607h1v1h-1zM420 557h1v1h-1zM420 507h1v1h-1zM420 457h1v1h-1zM420 407h1v1h-1zM420 357h1v1h-1zM420 307h1v1h-1zM420 257h1v1h-1zM420 207h1v1h-1zM420 157h1v1h-1zM470 707h1v1h-1zM470 657h1v1h-1zM470 607h1v1h-1zM470 557h1v1h-1zM470 507h1v1h-1zM470 457h1v1h-1zM470 407h1v1h-1zM470 357h1v1h-1zM470 307h1v1h-1zM470 257h1v1h-1zM470 207h1v1h-1zM470 157h1v1h-1zM520 707h1v1h-1zM520 657h1v1h-1zM520 607h1v1h-1zM520 557h1v1h-1zM520 507h1v1h-1zM520 457h1v1h-1zM520 407h1v1h-1zM520 357h1v1h-1zM520 307h1v1h-1zM520 257h1v1h-1zM520 207h1v1h-1zM520 157h1v1h-1zM570 707h1v1h-1zM570 657h1v1h-1zM570 607h1v1h-1zM570 557h1v1h-1zM570 507h1v1h-1zM570 457h1v1h-1zM570 407h1v1h-1zM570 357h1v1h-1zM570 307h1v1h-1zM570 257h1v1h-1zM570 207h1v1h-1zM570 157h1v1h-1zM620 707h1v1h-1zM620 657h1v1h-1zM620 607h1v1h-1zM620 557h1v1h-1zM620 507h1v1h-1zM620 457h1v1h-1zM620 407h1v1h-1zM620 357h1v1h-1zM620 307h1v1h-1zM620 257h1v1h-1zM620 207h1v1h-1zM620 157h1v1h-1zM670 707h1v1h-1zM670 657h1v1h-1zM670 607h1v1h-1zM670 557h1v1h-1zM670 507h1v1h-1zM670 457h1v1h-1zM670 407h1v1h-1zM670 357h1v1h-1zM670 307h1v1h-1zM670 257h1v1h-1zM670 207h1v1h-1zM670 157h1v1h-1zM720 707h1v1h-1zM720 657h1v1h-1zM720 607h1v1h-1zM720 557h1v1h-1zM720 507h1v1h-1zM720 457h1v1h-1zM720 407h1v1h-1zM720 357h1v1h-1zM720 307h1v1h-1zM720 257h1v1h-1zM720 207h1v1h-1zM720 157h1v1h-1zM770 707h1v1h-1zM770 657h1v1h-1zM770 607h1v1h-1zM770 557h1v1h-1zM770 507h1v1h-1zM770 457h1v1h-1zM770 407h1v1h-1zM770 357h1v1h-1zM770 307h1v1h-1zM770 257h1v1h-1zM770 207h1v1h-1zM770 157h1v1h-1zM820 707h1v1h-1zM820 657h1v1h-1zM820 607h1v1h-1zM820 557h1v1h-1zM820 507h1v1h-1zM820 457h1v1h-1zM820 407h1v1h-1zM820 357h1v1h-1zM820 307h1v1h-1zM820 257h1v1h-1zM820 207h1v1h-1zM820 157h1v1h-1zM870 707h1v1h-1zM870 657h1v1h-1zM870 607h1v1h-1zM870 557h1v1h-1zM870 507h1v1h-1zM870 457h1v1h-1zM870 407h1v1h-1zM870 357h1v1h-1zM870 307h1v1h-1zM870 257h1v1h-1zM870 207h1v1h-1zM870 157h1v1h-1zM920 707h1v1h-1zM920 657h1v1h-1zM920 607h1v1h-1zM920 557h1v1h-1zM920 507h1v1h-1zM920 457h1v1h-1zM920 407h1v1h-1zM920 357h1v1h-1zM920 307h1v1h-1zM920 257h1v1h-1zM920 207h1v1h-1zM920 157h1v1h-1zM970 707h1v1h-1zM970 657h1v1h-1zM970 607h1v1h-1zM970 557h1v1h-1zM970 507h1v1h-1zM970 457h1v1h-1zM970 407h1v1h-1zM970 357h1v1h-1zM970 307h1v1h-1zM970 257h1v1h-1zM970 207h1v1h-1zM970 157h1v1h-1zM1020 707h1v1h-1zM1020 657h1v1h-1zM1020 607h1v1h-1zM1020 557h1v1h-1zM1020 507h1v1h-1zM1020 457h1v1h-1zM1020 407h1v1h-1zM1020 357h1v1h-1zM1020 307h1v1h-1zM1020 257h1v1h-1zM1020 207h1v1h-1zM1020 157h1v1h-1zM1070 707h1v1h-1zM1070 657h1v1h-1zM1070 607h1v1h-1zM1070 557h1v1h-1zM1070 507h1v1h-1zM1070 457h1v1h-1zM1070 407h1v1h-1zM1070 357h1v1h-1zM1070 307h1v1h-1zM1070 257h1v1h-1zM1070 207h1v1h-1zM1070 157h1v1h-1zM1120 707h1v1h-1zM1120 657h1v1h-1zM1120 607h1v1h-1zM1120 557h1v1h-1zM1120 507h1v1h-1zM1120 457h1v1h-1zM1120 407h1v1h-1zM1120 357h1v1h-1zM1120 307h1v1h-1zM1120 257h1v1h-1zM1120 207h1v1h-1zM1120 157h1v1h-1z"/>
<g stroke="#8a0808" stroke-width="1.4">
<line x1="100" y1="707.5" x2="140" y2="707.5"/>
<line x1="120.5" y1="687" x2="120.5" y2="727"/>
</g>
<g stroke="#ececec" stroke-width="1.5" fill="none">
<line x1="320" y1="406.5" x2="320" y2="607" stroke="#b4b4b4"/>
<path d="M520 507L720 407L920 507L720 607Z"/>
</g>
<circle cx="720" cy="406.5" r="4.8" fill="none" stroke="#8c0000" stroke-width="1"/>
<path d="M720 401.5V411.5M715.5 406.5H724.5" stroke="#700000" stroke-width="0.9"/>
</svg>

<!-- V SCROLL -->
<div class="a" style="left:1139px;top:155px;width:15px;height:577px;background:#f9f9f9"></div>
<div class="a" style="left:1143px;top:243px;width:7px;height:328px;background:#838383;border-radius:4px"></div>
<!-- H SCROLL -->
<div class="a" style="left:95px;top:732px;width:988px;height:16px;background:#f9f9f9"></div>
<div class="a" style="left:221px;top:736px;width:731px;height:8px;background:#838383;border-radius:4px"></div>
<div class="a" style="left:1083px;top:732px;width:71px;height:16px;background:#ececec"></div>
<div class="a" style="left:1090px;top:733px;width:63px;font-size:13px;line-height:15px;text-align:right;color:#111;white-space:nowrap">10 &lt; 100</div>

<!-- COMMAND -->
<div class="a" style="left:72px;top:748px;width:1082px;height:2px;background:#c8c8c8"></div>
<div class="a" style="left:72px;top:750px;width:1082px;height:20px;background:#fff"></div>
<div class="a" style="left:77px;top:751px;font-size:13.5px;line-height:15px;color:#0a0ad8;white-space:nowrap"><i>Opdracht:</i> delete</div>
<div class="a" style="left:1138px;top:750px;width:15px;height:20px;background:#fafafa"></div>
<div class="a" style="left:1142px;top:750px;width:8px;height:17px;background:#808080;border-radius:4px"></div>
<div class="a" style="left:72px;top:770px;width:1082px;height:2px;background:#d2d2d2"></div>
<div class="a" style="left:72px;top:772px;width:1082px;height:26px;background:#ececec"></div>
<div class="a" style="left:73px;top:777px;font-size:13.5px;line-height:15px;color:#111;white-space:nowrap">Opdracht:</div>
<div class="a" style="left:137px;top:776px;width:990px;height:18px;background:#fff"></div>
<div class="a" style="left:1127px;top:772px;width:26px;height:25px;background:#ececec;border:1px solid #c4c4c4"></div>
<svg class="a" style="left:1132px;top:779px" width="16" height="12"><rect x="1" y="1" width="14" height="10" fill="#fff" stroke="#222" stroke-width="1"/><rect x="1" y="1" width="14" height="3" fill="#111"/></svg>
<div class="a" style="left:1154px;top:107px;width:2px;height:691px;background:#c4c4c4"></div>

<!-- LAYER DOCK -->
<div class="a" style="left:1156px;top:107px;width:298px;height:691px;background:#fff"></div>
<div class="a" style="left:1156px;top:107px;width:298px;height:23px;background:linear-gradient(#ececec,#dadada);border-top:1px solid #c8c8c8"></div>
<div class="a" style="left:1297px;top:113px;font-size:11.6px;line-height:14px;color:#222;white-space:nowrap">Lagenlijst</div>
<svg class="a" style="left:1156px;top:110px" width="36" height="16">
<circle cx="8" cy="8" r="7" fill="#6c6c6c"/><path d="M5 5L11 11M11 5L5 11" stroke="#fff" stroke-width="2"/>
<circle cx="26" cy="8" r="7" fill="#6c6c6c"/><rect x="21.5" y="7.5" width="6" height="4.5" fill="none" stroke="#fff" stroke-width="1.2"/><path d="M23.5 7.5V5.5H30V10H27.5" fill="none" stroke="#fff" stroke-width="1.2"/>
</svg>
<div class="a" style="left:1156px;top:130px;width:298px;height:26px;background:#b0b0b0"></div>
<div class="a" style="left:1156px;top:131px;width:58px;height:24px;background:linear-gradient(#f6f6f6,#e9e9e9)"></div>
<div class="a" style="left:1216px;top:131px;width:58px;height:24px;background:linear-gradient(#f6f6f6,#e9e9e9)"></div>
<div class="a" style="left:1276px;top:131px;width:58px;height:24px;background:linear-gradient(#f6f6f6,#e9e9e9)"></div>
<div class="a" style="left:1336px;top:131px;width:58px;height:24px;background:linear-gradient(#f6f6f6,#e9e9e9)"></div>
<div class="a" style="left:1396px;top:131px;width:58px;height:24px;background:linear-gradient(#f6f6f6,#e9e9e9)"></div>
<svg class="a" style="left:1156px;top:131px" width="298" height="25">
<g transform="translate(29,12)"><path d="M-7.5 0.3C-6 -4.2 -3 -5.6 0 -5.6C3.5 -5.6 6.5 -4 7.6 0.6C6 4.2 3 5.6 0 5.6C-3.5 5.6 -6 4 -7.5 0.3Z" fill="#000"/><path d="M-5.2 -0.2Q0 -3.2 5.2 -0.2Q3.5 4 0 4Q-3.5 4 -5.2 -0.2Z" fill="#fff"/><circle cx="0" cy="-0.6" r="3" fill="#000"/><path d="M-1.2 -1.5Q-0.6 0.8 1.2 0.6" fill="none" stroke="#fff" stroke-width="0.6"/></g>
<g transform="translate(89,12)"><path d="M-7.5 0.3C-6 -4.2 -3 -5.6 0 -5.6C3.5 -5.6 6.5 -4 7.6 0.6C6 4.2 3 5.6 0 5.6C-3.5 5.6 -6 4 -7.5 0.3Z" fill="#aaa"/><path d="M-5.2 -0.2Q0 -3.2 5.2 -0.2Q3.5 4 0 4Q-3.5 4 -5.2 -0.2Z" fill="#f2f2f2"/><circle cx="0" cy="-0.6" r="3" fill="#aaa"/></g>
<path d="M147 6.5h3v4.5h4.5v3h-4.5v4.5h-3v-4.5h-4.5v-3h4.5z" fill="#e60000" stroke="#600" stroke-width="0.4"/>
<rect x="203" y="10.5" width="12" height="3" fill="#e60000" stroke="#600" stroke-width="0.4"/>
<g transform="translate(269,12) rotate(-45)"><rect x="-7" y="-1.6" width="13" height="3.2" fill="#e0a030" stroke="#8a5a10" stroke-width="0.5"/><rect x="5" y="-1.6" width="2.5" height="3.2" fill="#d02020"/><path d="M-7 -1.6L-10 0L-7 1.6Z" fill="#e8c890" stroke="#555" stroke-width="0.4"/></g>
</svg>
<svg class="a" style="left:1156px;top:156px" width="298" height="22">
<rect x="5.5" y="7.5" width="15" height="8" fill="#fff" stroke="#111" stroke-width="1"/>
<g transform="translate(245,11) rotate(-45)"><rect x="-7" y="-1.6" width="13" height="3.2" fill="#e0a030" stroke="#8a5a10" stroke-width="0.5"/><rect x="5" y="-1.6" width="2.5" height="3.2" fill="#d02020"/><path d="M-7 -1.6L-10 0L-7 1.6Z" fill="#e8c890" stroke="#555" stroke-width="0.4"/></g>
<g transform="translate(267,10.5)"><path d="M-7.5 0.3C-6 -4.2 -3 -5.6 0 -5.6C3.5 -5.6 6.5 -4 7.6 0.6C6 4.2 3 5.6 0 5.6C-3.5 5.6 -6 4 -7.5 0.3Z" fill="#000"/><path d="M-5.2 -0.2Q0 -3.2 5.2 -0.2Q3.5 4 0 4Q-3.5 4 -5.2 -0.2Z" fill="#fff"/><circle cx="0" cy="-0.6" r="3" fill="#000"/><path d="M-1.2 -1.5Q-0.6 0.8 1.2 0.6" fill="none" stroke="#fff" stroke-width="0.6"/></g>
<path d="M285.5 11V8.5A3.5 3.5 0 0 1 292.5 8.5V11" fill="none" stroke="#bbb" stroke-width="1.5"/><rect x="284" y="11" width="10" height="7" fill="#bbb"/>
</svg>
<div class="a" style="left:1183px;top:159px;font-size:13.5px;line-height:15px;color:#111">0</div>


<!-- RIGHT TOOLBAR -->
<div class="a" style="left:1454px;top:107px;width:46px;height:691px;background:linear-gradient(90deg,#c8c8c8 0 1px,#ececec 1px,#dedede 50%,#c4c4c4 94%,#b4b4b4)"></div>
<div class="a" style="left:1456px;top:120px;width:42px;height:42px;border-radius:7px;background:#b9b9b9"></div>
<div class="a" style="left:1456px;top:418px;width:42px;height:41px;border-radius:7px;background:#b9b9b9"></div>
<div class="a" style="left:1457px;top:261px;width:41px;height:0;border-top:1px dotted #777"></div>
<div class="a" style="left:1457px;top:409px;width:41px;height:0;border-top:1px dotted #777"></div>
<div class="a" style="left:1462px;top:116px;width:28px;height:2px;background:repeating-linear-gradient(90deg,#999 0 2px,transparent 2px 6px)"></div>
<svg class="a" style="left:1462px;top:126px" width="30" height="30"><rect x="1.5" y="1.5" width="27" height="27" fill="#fff" stroke="#444" stroke-width="1"/><rect x="1" y="1" width="28" height="5" fill="#000"/><rect x="2.5" y="2" width="3" height="3" fill="#fff"/><path d="M9 12l4-2v12l-4 2z" fill="#777" stroke="#333" stroke-width="0.6"/><path d="M12 11l9-3v13l-9 3z" fill="#ddd" stroke="#444" stroke-width="0.6"/><path d="M14 11l8-3v13l-8 3z" fill="#fff" stroke="#444" stroke-width="0.6"/><path d="M16 20l4-9l0.5 8z" fill="none" stroke="#e02020" stroke-width="0.9"/></svg>
<svg class="a" style="left:1462px;top:173px" width="30" height="30"><rect x="1.5" y="1.5" width="27" height="27" fill="#fff" stroke="#444" stroke-width="1"/><rect x="1" y="1" width="28" height="5" fill="#000"/><rect x="2.5" y="2" width="3" height="3" fill="#fff"/><rect x="8" y="11" width="11" height="8" fill="#f3e8c0" stroke="#555" stroke-width="0.8"/><circle cx="18" cy="19" r="5" fill="#f3e8c0" fill-opacity="0.9" stroke="#555" stroke-width="0.8"/></svg>
<svg class="a" style="left:1462px;top:219px" width="30" height="30"><rect x="1.5" y="1.5" width="27" height="27" fill="#fff" stroke="#444" stroke-width="1"/><rect x="1" y="1" width="28" height="5" fill="#000"/><rect x="2.5" y="2" width="3" height="3" fill="#fff"/><rect x="7" y="11" width="16" height="12" rx="2.5" fill="#f4f4f4" stroke="#b8c8e0" stroke-width="1"/></svg>
<svg class="a" style="left:1462px;top:275px" width="30" height="30"><rect x="1.5" y="1.5" width="27" height="27" fill="#fff" stroke="#444" stroke-width="1"/><rect x="1" y="1" width="28" height="5" fill="#000"/><rect x="2.5" y="2" width="3" height="3" fill="#fff"/><rect x="5" y="10" width="3" height="3" fill="#111"/><rect x="5" y="15" width="3" height="3" fill="#111"/><rect x="5" y="20" width="3" height="3" fill="#111"/><rect x="10.5" y="10.5" width="14" height="2.5" fill="none" stroke="#333" stroke-width="0.8"/><rect x="10.5" y="15.5" width="14" height="2.5" fill="none" stroke="#333" stroke-width="0.8"/><rect x="10.5" y="20.5" width="14" height="2.5" fill="none" stroke="#333" stroke-width="0.8"/></svg>
<svg class="a" style="left:1462px;top:321px" width="30" height="30"><rect x="1.5" y="1.5" width="27" height="27" fill="#fff" stroke="#444" stroke-width="1"/><rect x="1" y="1" width="28" height="5" fill="#000"/><rect x="2.5" y="2" width="3" height="3" fill="#fff"/><path d="M7 10h16l-6 7v7l-4 -2v-5z" fill="#999" stroke="#444" stroke-width="0.8"/><ellipse cx="15" cy="10.5" rx="8" ry="1.5" fill="#ccc" stroke="#444" stroke-width="0.6"/></svg>
<svg class="a" style="left:1462px;top:367px" width="30" height="30"><rect x="1.5" y="1.5" width="27" height="27" fill="#fff" stroke="#444" stroke-width="1"/><rect x="1" y="1" width="28" height="5" fill="#000"/><rect x="2.5" y="2" width="3" height="3" fill="#fff"/><path d="M6 10v14l6-3v-8z" fill="#fff" stroke="#333" stroke-width="0.9"/><rect x="12" y="13" width="12" height="8" fill="#888" stroke="#333" stroke-width="0.7"/><path d="M3 17h24" stroke="#e06060" stroke-width="0.8" stroke-dasharray="1.5 1"/></svg>
<svg class="a" style="left:1462px;top:423px" width="30" height="30"><rect x="1.5" y="1.5" width="27" height="27" fill="#fff" stroke="#444" stroke-width="1"/><rect x="1" y="1" width="28" height="5" fill="#000"/><rect x="2.5" y="2" width="3" height="3" fill="#fff"/><g fill="#666"><rect x="4" y="9" width="8" height="1"/><rect x="4" y="12" width="10" height="1"/><rect x="4" y="15" width="9" height="1"/><rect x="4" y="18" width="11" height="1"/></g><rect x="1.5" y="23" width="27" height="5" fill="#fff" stroke="#444" stroke-width="0.8"/><g fill="#444"><rect x="4" y="25" width="2" height="1"/><rect x="12" y="25" width="11" height="1"/></g></svg>
<svg class="a" style="left:1462px;top:470px" width="30" height="30"><rect x="1.5" y="1.5" width="27" height="27" fill="#fff" stroke="#444" stroke-width="1"/><rect x="1" y="1" width="28" height="5" fill="#000"/><rect x="2.5" y="2" width="3" height="3" fill="#fff"/><rect x="9" y="10" width="12" height="15" rx="1" fill="#c89030" stroke="#805010" stroke-width="0.6"/><rect x="11" y="12" width="8" height="11" fill="#f4f4f4"/><rect x="12" y="8.5" width="6" height="3" rx="1" fill="#888"/><g fill="#aaa"><rect x="12" y="14" width="6" height="0.8"/><rect x="12" y="16" width="6" height="0.8"/><rect x="12" y="18" width="6" height="0.8"/></g></svg>


<!-- STATUS BAR -->
<div class="a" style="left:0;top:798px;width:1500px;height:46px;background:#dcdcdc;border-top:1px solid #c6c6c6"></div>
<div class="st" style="left:2px;top:806px">63.4,83.4</div>
<div class="st" style="left:2px;top:826px">@-56.6,23.4</div>
<div class="a" style="left:253px;top:802px;width:1px;height:40px;background:#8a8a8a"></div>
<div class="st" style="left:256px;top:806px">104.7622&lt;53°</div>
<div class="st" style="left:256px;top:826px">@61.2464&lt;158°</div>
<div class="a" style="left:506px;top:819px;width:6px;height:6px;border-radius:3px;background:#c6c6c6"></div>
<div class="st" style="left:500px;top:812px;width:199px;text-align:right;line-height:11px">Object of gebied selecteren<br>Object of referentiepunt verplaatsen</div>
<svg class="a" style="left:716px;top:805px" width="20" height="32"><rect x="1.5" y="1.5" width="17" height="29" rx="8.5" fill="#fff" stroke="#333" stroke-width="1"/><line x1="1.5" y1="14.5" x2="18.5" y2="14.5" stroke="#333"/><line x1="10" y1="1.5" x2="10" y2="14.5" stroke="#333"/><rect x="8.5" y="3.5" width="3" height="8" rx="1.5" fill="#fff" stroke="#333" stroke-width="0.9"/></svg>
<div class="a" style="left:939px;top:819px;width:6px;height:6px;border-radius:3px;background:#c6c6c6"></div>
<div class="st" style="left:949px;top:816px">Geen objecten geselecteerd.</div>
<div class="a" style="left:1269px;top:819px;width:6px;height:6px;border-radius:3px;background:#c6c6c6"></div>

</body></html>
